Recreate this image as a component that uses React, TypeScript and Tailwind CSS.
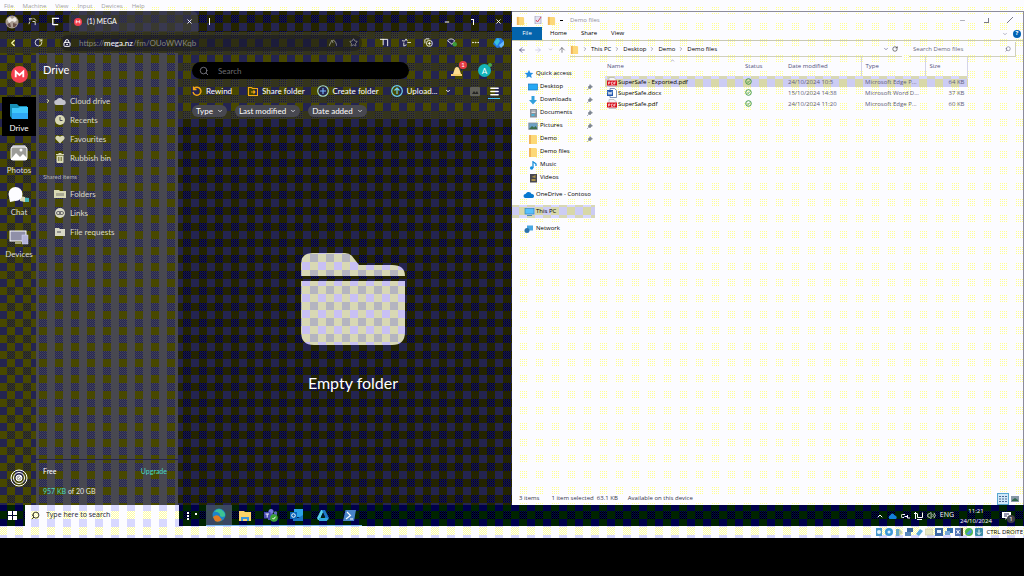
import React from "react";
import type { ReactNode } from "react";
import {
  ArrowLeft, ArrowRight, ArrowUp, ChevronDown, ChevronLeft, ChevronRight, ChevronUp,
  Ellipsis, LockKeyhole, Menu, Minus, RotateCw, Search, Star, X, Volume2,
} from "lucide-react";

const checker = "bg-fixed bg-[position:-1px_-1px] ";
const contentBg =
  checker +
  "bg-[image:conic-gradient(transparent_25%,#242400_0_50%,#242450_0_75%,#242400_0),conic-gradient(#000080_25%,#242400_0_50%,#000070_0_75%,#181800_0)] bg-[size:16px_16px,2px_2px]";
const toolsBg =
  checker +
  "bg-[image:conic-gradient(transparent_25%,#484800_0_50%,#242450_0_75%,#34341c_0),conic-gradient(#242458_25%,#484800_0_50%,#242458_0_75%,#303000_0)] bg-[size:16px_16px,2px_2px]";
const railBg =
  checker +
  "bg-[image:conic-gradient(transparent_25%,#484800_0_50%,#242450_0_75%,#484800_0),conic-gradient(#242450_25%,#303000_0_50%,#242450_0_75%,#383800_0)] bg-[size:16px_16px,2px_2px]";
const sidebarBg =
  checker +
  "bg-[image:conic-gradient(transparent_25%,#484800_0_50%,#484850_0),conic-gradient(#484850_25%,#242458_0_50%,#3c3c54_0_75%,#242458_0)] bg-[size:16px_16px,2px_2px]";
const lightBg =
  checker +
  "bg-[image:conic-gradient(#fcfcff_25%,transparent_0_50%,#fcfcff_0),conic-gradient(#ffff94_25%,#fcfcff_0)] bg-[size:16px_16px,2px_2px]";
const stripBg =
  checker +
  "bg-[image:conic-gradient(#fcfcff_25%,#fcfcff_0_50%,#d8d8ff_0_75%,transparent_0),conic-gradient(#ffff9c_25%,#fcfcff_0_50%,#ffff9c_0_75%,#fcfcff_0)] bg-[size:16px_16px,2px_2px]";
const taskbarBg =
  checker +
  "bg-[image:conic-gradient(transparent_25%,#002400_0_50%,#00004c_0_75%,#002400_0),conic-gradient(#000060_25%,#000000_0_50%,#000040_0_75%,#001800_0)] bg-[size:16px_16px,2px_2px]";
const selectedBg =
  checker + "bg-[image:conic-gradient(#d8d8a8_25%,#d8d8ff_0_50%,#d8d8b4_0_75%,#ccccf4_0)] bg-[size:16px_16px]";

/* ---------- drawings ---------- */

function MegaMark({ className }: { className: string }) {
  return (
    <svg viewBox="0 0 18 18" className={className} aria-hidden="true">
      <circle cx="9" cy="9" r="9" fill="#f43f4e" />
      <path d="M5 12V6l4 3.6L13 6v6" fill="none" stroke="#fff" strokeWidth="2" />
    </svg>
  );
}

function FolderSmall({ className = "size-[9px]" }: { className?: string }) {
  return (
    <svg viewBox="0 0 10 10" className={className} aria-hidden="true">
      <path d="M1 1h7l1 1v8H1z" fill="#fcd878" />
      <path d="M1 1h2v9H1z" fill="#f0b458" />
    </svg>
  );
}

function RailDrive() {
  return (
    <svg viewBox="0 0 18 16" className="h-4 w-[18px]" aria-hidden="true">
      <path d="M0 1h7l2 2h8v13H2L0 13z" fill="#1890b8" />
      <path d="M2 5h6l2-1h8v12H2z" fill="#40c8fc" />
      <path d="M2 10h16v6H2z" fill="#2ea8f4" />
    </svg>
  );
}
function RailPhotos() {
  return (
    <svg viewBox="0 0 18 16" className="h-4 w-[18px]" aria-hidden="true">
      <path d="M3 0h12l2 3H1z" fill="#a8a8b4" />
      <rect x="1" y="2" width="16" height="13" rx="2" fill="#9c9c98" stroke="#fff" />
      <path d="M1 14l5-6 4 4 3-3 4 4v2H1z" fill="#fff" />
      <circle cx="11" cy="5" r="1.500" fill="#fff" />
    </svg>
  );
}
function RailChat() {
  return (
    <svg viewBox="0 0 22 16" className="h-4 w-[22px]" aria-hidden="true">
      <path d="M12 10l9 1v4h-5z" fill="#48b4b4" />
      <path d="M12 9l5 1v5l-5-1z" fill="#d8d8b4" />
      <circle cx="7.500" cy="7" r="7" fill="#fcfcff" />
      <path d="M1 10l1 5 5-1z" fill="#fcfcff" />
    </svg>
  );
}
function RailDevices() {
  return (
    <svg viewBox="0 0 20 16" className="h-4 w-5" aria-hidden="true">
      <rect x="1" y="2" width="16" height="10" fill="#9090a8" stroke="#fff" />
      <path d="M6 14h6" stroke="#fff" />
      <rect x="13" y="6" width="6" height="9" fill="#b4b4d8" stroke="#d8d8fc" strokeWidth=".5" />
    </svg>
  );
}

const side = "h-[10px] w-3 shrink-0";
const sideIcons: Record<string, ReactNode> = {
  cloud: <svg viewBox="0 0 12 10" className={side}><path d="M3 9a2.500 2.500 0 0 1-.5-5A3.600 3.600 0 0 1 9 4a2.500 2.500 0 0 1 .5 5z" fill="#c4c4cc" /></svg>,
  clock: <svg viewBox="0 0 12 10" className={side}><circle cx="6" cy="5" r="5" fill="#d8d8b4" /><path d="M6 2v3.500h2.500" fill="none" stroke="#484850" /></svg>,
  heart: <svg viewBox="0 0 12 10" className={side}><path d="M6 9.500L2 5.500C0 3 3.500 0 6 2.800 8.500 0 12 3 10 5.500z" fill="#d8d8b4" /></svg>,
  bin: <svg viewBox="0 0 12 10" className={side}><path d="M2 1.500h8M4.500 0.500h3" stroke="#d8d8b4" /><path d="M2.500 2.500h7V9a1 1 0 0 1-1 1h-5a1 1 0 0 1-1-1z" fill="#d8d8b4" /><path d="M4.800 4v4M7.200 4v4" stroke="#484800" strokeWidth=".8" /></svg>,
  folders: <svg viewBox="0 0 12 10" className={side}><path d="M0 1h5l1 1h6v7H0z" fill="#d8d8b4" /><path d="M3 4v3M5 4v3M7 4v3M9 4v3" stroke="#606060" strokeWidth=".8" /></svg>,
  link: <svg viewBox="0 0 12 10" className={side}><circle cx="6" cy="5" r="5" fill="#d8d8c4" /><rect x="2.500" y="3.500" width="4" height="3" rx="1.500" fill="none" stroke="#505058" strokeWidth=".8" /><rect x="5.500" y="3.500" width="4" height="3" rx="1.500" fill="none" stroke="#505058" strokeWidth=".8" /></svg>,
  request: <svg viewBox="0 0 12 10" className={side}><path d="M1 1h4l1 1h5v7H1z" fill="#d8d8c4" /><path d="M3 5h4" stroke="#505058" /></svg>,
};

const exp = "size-[10px] shrink-0";
const navIcons: Record<string, ReactNode> = {
  star: <svg viewBox="0 0 10 10" className={exp}><path d="M5 1l1.300 2.800 3 .3-2.200 2 .6 3L5 7.500 2.300 9.100l.6-3-2.200-2 3-.3z" fill="#2490e4" /></svg>,
  desktop: <svg viewBox="0 0 10 10" className={exp}><rect x=".5" y="2" width="9" height="6" fill="#24a8f4" stroke="#1878c0" strokeWidth=".7" /></svg>,
  down: <svg viewBox="0 0 10 10" className={exp}><path d="M3.500 1h3v4H9L5 9.500 1 5h2.500z" fill="#30a0dc" /></svg>,
  doc: <svg viewBox="0 0 10 10" className={exp}><rect x="2" y="1" width="7" height="8.500" fill="#889098" /><path d="M3.500 3h4M3.500 4.500h4" stroke="#fff" strokeWidth=".7" /><rect x="3.500" y="6" width="3" height="2" fill="#48b4d8" /></svg>,
  pic: <svg viewBox="0 0 10 10" className={exp}><rect x=".8" y="2" width="8.500" height="6.500" fill="#6ca0c4" stroke="#889098" strokeWidth=".8" /><path d="M1 8l3-3 2 1.500L7.500 5 9 7v1z" fill="#3c6c48" /></svg>,
  folder: <FolderSmall className={exp} />,
  music: <svg viewBox="0 0 10 10" className={exp}><path d="M5 1v7M5 1.500l3 2.500v2" fill="none" stroke="#1890dc" strokeWidth="1.300" /><circle cx="3.600" cy="8" r="1.700" fill="#1890dc" /></svg>,
  video: <svg viewBox="0 0 10 10" className={exp}><rect x="2" y="1" width="7" height="8.500" fill="#484850" /><path d="M3.500 4l4-2v3zM3.500 6h4v2h-4z" fill="#a89048" /></svg>,
  onedrive: <svg viewBox="0 0 12 10" className="h-[10px] w-3 shrink-0"><path d="M2.500 8a2 2 0 0 1 0-4C4 1 8 1.500 8.500 4A2 2 0 0 1 9.500 8z" fill="#0878d0" /></svg>,
  pc: <svg viewBox="0 0 12 10" className="h-[10px] w-3 shrink-0"><rect x="2" y="1.500" width="9" height="5.500" fill="#58c0fc" stroke="#3888b8" strokeWidth=".7" /><path d="M4 8.500h5" stroke="#4890b8" /></svg>,
  network: <svg viewBox="0 0 12 10" className="h-[10px] w-3 shrink-0"><rect x="4" y="1.500" width="6" height="5" fill="#48a8e4" /><circle cx="4" cy="6.500" r="2.500" fill="#2c74ac" /></svg>,
};

function PinMark() {
  return (
    <svg viewBox="0 0 6 6" className="ml-auto size-[6px]" aria-hidden="true">
      <path d="M3 0.500l2.500 2.500-1 .3L3 5 1 3l1.800-1.500zM0 6l2-2" fill="#7c8490" stroke="#7c8490" strokeWidth=".6" />
    </svg>
  );
}

function PdfIcon() {
  return (
    <svg viewBox="0 0 10 10" className="size-[10px] shrink-0" aria-hidden="true">
      <path d="M2 .5h5l2 2v7H2z" fill="#f4f4f4" stroke="#a8a8a8" strokeWidth=".6" />
      <rect x="0" y="3.500" width="10" height="5" fill="#d8101c" />
      <path d="M1.500 7.500v-2.500h1.500v1.200H1.500M4.500 5v2.500h.8a1.200 1.200 0 0 0 0-2.500zM7.500 7.500V5H9M7.500 6.200h1" fill="none" stroke="#fff" strokeWidth=".6" />
    </svg>
  );
}
function WordIcon() {
  return (
    <svg viewBox="0 0 10 10" className="size-[10px] shrink-0" aria-hidden="true">
      <path d="M3 .5h4.500l2 2v7H3z" fill="#fff" stroke="#506898" strokeWidth=".7" />
      <rect x="0" y="2" width="6" height="6" fill="#2458b0" />
      <path d="M1 3.500l1 3 1-2.500 1 2.500 1-3" fill="none" stroke="#fff" strokeWidth=".8" />
    </svg>
  );
}

/* ---------- browser window ---------- */

const railItems = [
  { label: "Drive", icon: <RailDrive />, active: true },
  { label: "Photos", icon: <RailPhotos /> },
  { label: "Chat", icon: <RailChat /> },
  { label: "Devices", icon: <RailDevices /> },
];

function SideLink({ icon, label, caret }: { icon: string; label: string; caret?: boolean }) {
  return (
    <a href="#" className="flex h-[19px] items-center">
      <span className="flex w-[18px] items-center pl-[9px]">{caret && <ChevronRight size={6} strokeWidth={4} className="text-[#fcfcb4]" />}</span>
      {sideIcons[icon]}
      <span className="pl-1">{label}</span>
    </a>
  );
}

function Action({ icon, label, className = "" }: { icon: ReactNode; label: string; className?: string }) {
  return (
    <button className={"flex items-center gap-1 whitespace-nowrap " + className}>
      {icon}
      {label}
    </button>
  );
}

function Browser() {
  return (
    <section className="flex min-w-0 flex-col font-['Lato',sans-serif] text-[8px] text-white">
      <header className={"flex h-[21px] shrink-0 items-center pl-[5px] pr-[10px] " + contentBg}>
        <svg viewBox="0 0 14 14" className="size-[14px]" aria-label="Profile">
          <circle cx="7" cy="7" r="6.500" fill="#a89c90" />
          <path d="M2 4l3-2 2 2 3-2 2 3-2 2-3-1-3 2z" fill="#ece8e4" />
          <path d="M2 9l3-1 1 4H4zM8 8l4 1-2 3H8z" fill="#685048" />
        </svg>
        <svg viewBox="0 0 10 10" className="ml-[9px] size-[9px]" fill="none" stroke="#e4e4d8"><path d="M1 2h4M2 2v2M1 8l1-3M5 5h3v4M6 1l3 3" /></svg>
        <svg viewBox="0 0 10 10" className="ml-[14px] size-[9px]" fill="none" stroke="#fff"><path d="M1 1.500h8M2 1v8M2 8.500h6" strokeWidth="1.500" /></svg>
        <div className="ml-[9px] flex h-full w-[129px] items-center rounded-t-md bg-[#484850]/60 px-[5px] text-[7px]">
          <MegaMark className="size-2" />
          <span className="pl-[5px]">(1) MEGA</span>
          <button aria-label="Close tab" className="ml-auto"><X size={7} strokeWidth={3} /></button>
        </div>
        <span className="ml-[11px] h-[7px] w-px bg-white" />
        <div className="ml-auto flex items-center gap-[21px]">
          <button aria-label="Minimise"><Minus size={6} strokeWidth={4} /></button>
          <button aria-label="Restore" className="h-[6px] w-[3px] border-r border-t border-white" />
          <button aria-label="Close"><X size={7} strokeWidth={3} /></button>
        </div>
      </header>

      <div className={"flex h-[21px] shrink-0 items-center pl-2 pr-[7px] " + toolsBg}>
        <button aria-label="Back"><ChevronLeft size={10} strokeWidth={3} className="text-[#fcfcb4]" /></button>
        <button aria-label="Reload" className="ml-4"><RotateCw size={9} strokeWidth={2} /></button>
        <div className="ml-[17px] flex h-4 min-w-0 flex-1 items-center rounded-full bg-[#141424]/50 pl-[3px]">
          <LockKeyhole size={8} strokeWidth={3} />
          <span className="pl-2 text-[#84847c]">https://<span className="text-white">mega.nz</span>/fm/OUoWWKqb</span>
          <span className="ml-auto flex items-center gap-3 pr-1 text-[#9c9c90]">
            <svg viewBox="0 0 8 8" className="size-2" fill="none" stroke="currentColor"><path d="M0 7l3-6 1 3M4 1c3 1 3 4 4 6" strokeWidth=".8" /></svg>
            <Star size={9} />
          </span>
        </div>
        <div className="ml-[18px] flex items-center gap-[13px]">
          <svg viewBox="0 0 10 10" className="size-[9px]" fill="none" stroke="#fff"><path d="M0 1.500h8.500V9M3.500 1v7" /></svg>
          <svg viewBox="0 0 10 10" className="size-[9px]" fill="none" stroke="#e4e4d8"><path d="M0 3l3 .5L4.500 1 6 3.500M2 5v4l3-1.500M6 5h4" /></svg>
          <svg viewBox="0 0 10 10" className="size-[9px]" fill="none" stroke="#fff"><rect x="3" y="3" width="6" height="6" rx="2" /><path d="M1 6V2l1-1h4M6 4.500v3M4.500 6h3" /></svg>
          <svg viewBox="0 0 12 10" className="h-[9px] w-3"><path d="M1 3q4-4 8 0l-3 4z" fill="none" stroke="#e4e4e4" /><circle cx="9" cy="7" r="2.500" fill="#3c9c3c" /></svg>
          <Ellipsis size={9} />
          <svg viewBox="0 0 12 12" className="size-3"><path d="M3 1h5l3 3-2 6-5 1-4-4z" fill="#2478e4" /><path d="M1 5l4-4 2 3-3 5z" fill="#38c0dc" /><path d="M6 8l5-4v4l-3 3z" fill="#68b8fc" /></svg>
        </div>
      </div>

      <div className="flex min-h-0 flex-1">
        <nav aria-label="Products" className={"flex w-9 shrink-0 flex-col items-center pb-[18px] pt-[13px] pl-[2px] " + railBg}>
          <MegaMark className="size-[17px] shrink-0" />
          <div className="mt-[14px] flex w-full flex-col gap-[3px]">
            {railItems.map((it) => (
              <a key={it.label} href="#" className={"flex h-[39px] flex-col items-center justify-between pb-[3px] pt-[6px] leading-[10px] " + (it.active ? "bg-black text-white" : "text-[#dcdcd0]")}>
                {it.icon}
                {it.label}
              </a>
            ))}
          </div>
          <svg viewBox="0 0 18 18" className="mt-auto size-[18px]" fill="none" stroke="#fff">
            <circle cx="9" cy="9" r="8" /><circle cx="9" cy="9" r="5.500" /><circle cx="9" cy="9" r="3" fill="#b4b4b4" /><path d="M8 10l3-3" />
          </svg>
        </nav>

        <aside className={"flex w-[142px] shrink-0 flex-col text-[#d8d8c8] " + sidebarBg}>
          <h1 className="px-[7px] pt-[9px] text-[11px] leading-4 text-white">Drive</h1>
          <div className="mt-[13px]">
            <SideLink icon="cloud" label="Cloud drive" caret />
            <SideLink icon="clock" label="Recents" />
            <SideLink icon="heart" label="Favourites" />
            <SideLink icon="bin" label="Rubbish bin" />
          </div>
          <h2 className="mt-[3px] px-[7px] text-[6px] leading-[14px] text-[#b4b4b0]">Shared items</h2>
          <SideLink icon="folders" label="Folders" />
          <SideLink icon="link" label="Links" />
          <SideLink icon="request" label="File requests" />
          <div className="mt-auto border-t border-[#242450] px-[7px] pb-[9px] pt-[6px] text-[7px] leading-[10px]">
            <div className="flex justify-between pr-[4px] text-white">Free<a href="#" className="text-[#48d8c0]">Upgrade</a></div>
            <div className="mt-[10px] text-[#e4e4e4]"><span className="text-[#48d8c0]">957 KB</span> of 20 GB</div>
          </div>
        </aside>

        <main className={"flex min-w-0 flex-1 flex-col " + contentBg}>
          <div className={"pb-[2px] pl-[14px] pr-[12px] pt-[9px] " + toolsBg}>
            <div className="flex items-center">
              <label className="flex h-[17px] w-[217px] items-center gap-[9px] rounded-full bg-black pl-[7px]">
                <Search size={10} className="text-[#80808c]" />
                <input aria-label="Search" placeholder="Search" className="min-w-0 flex-1 bg-transparent text-[8px] outline-none placeholder:text-[#6c6c70]" />
              </label>
              <span className="relative ml-auto mr-[15px]">
                <svg viewBox="0 0 12 12" className="size-3"><path d="M2 9l2-6q2-2 4 0l2 6z" fill="#fcdc90" /><path d="M0 9h11v2H0z" fill="#f8cc70" /></svg>
                <span className="absolute -right-1 -top-1 flex size-[8px] items-center justify-center rounded-full bg-[#e43c44] text-[6px] leading-none">1</span>
              </span>
              <span className="relative mr-[9px] flex size-[13px] items-center justify-center rounded-full bg-[#14b4b8] text-[8px]">
                A
                <span className="absolute -right-px -top-px size-[4px] rounded-full bg-[#48a848]" />
              </span>
            </div>
            <div className="mt-[6px] flex h-3 items-center">
              <Action label="Rewind" icon={<svg viewBox="0 0 10 10" className="size-[10px]" fill="none" stroke="#f4a818" strokeWidth="1.300"><path d="M2 2.500a4 4 0 1 1-1 3.500M1.500 .5v3h3" /></svg>} />
              <Action className="ml-4" label="Share folder" icon={<svg viewBox="0 0 10 10" className="size-[10px]" fill="none" stroke="#f4a818" strokeWidth="1.100"><path d="M.5 1.500h3l1 1h5v7h-9zM3 6h4M5.500 4.500L7 6 5.500 7.500" /></svg>} />
              <Action className="ml-3" label="Create folder" icon={<svg viewBox="0 0 12 12" className="size-3" fill="none" stroke="#a8dcd0" strokeWidth="1.100"><circle cx="6" cy="6" r="5.300" /><path d="M6 3v6M3 6h6" stroke="#78b8fc" /></svg>} />
              <Action className="ml-3" label="Upload..." icon={<svg viewBox="0 0 12 12" className="size-3" fill="none" stroke="#70d0ec" strokeWidth="1.200"><circle cx="6" cy="6" r="5.300" /><path d="M6 9V3M3.500 5.500L6 3l2.500 2.500" /></svg>} />
              <ChevronDown size={6} strokeWidth={4} className="ml-2" />
              <svg viewBox="0 0 10 9" className="ml-auto h-[9px] w-[10px]"><rect width="10" height="9" rx="1" fill="#606058" /><path d="M2 7l2-3 1.500 2L7 4l1.500 3z" fill="#242424" /></svg>
              <button aria-label="List view" className="ml-2 flex w-3 flex-col items-center border-b border-[#48c8f4] pb-px pt-[2px]"><Menu size={11} strokeWidth={3} /></button>
            </div>
            <div className="mt-[8px] flex gap-2">
              {["Type", "Last modified", "Date added"].map((t) => (
                <button key={t} className="flex h-3 items-center gap-1 rounded-full bg-[#484850] px-1 leading-none">
                  {t}
                  <ChevronDown size={6} strokeWidth={3} />
                </button>
              ))}
            </div>
          </div>
          <div className="flex flex-1 flex-col items-center pl-4 pt-[134px]">
            <svg viewBox="0 0 104 92" className="h-[92px] w-[104px] shrink-0" aria-hidden="true">
              <defs>
                <pattern id="weave" width="16" height="16" patternUnits="userSpaceOnUse" x="1" y="1">
                  <path d="M0 0h16v16H0z" fill="#d8d8b4" />
                  <path d="M8 0h8v8H8z" fill="#b4b4c0" />
                  <path d="M0 8h8v8H0z" fill="#c8c0f4" />
                </pattern>
              </defs>
              <path d="M0 23V11Q0 0 12 0h32q4 0 7 3l7 9h33q13 0 13 11zM0 28h104v51q0 13-13 13H13Q0 92 0 79z" fill="url(#weave)" />
            </svg>
            <p className="mt-[26px] text-[16px] leading-6">Empty folder</p>
          </div>
        </main>
      </div>
    </section>
  );
}

/* ---------- file manager window ---------- */

const quick = [
  ["desktop", "Desktop", true], ["down", "Downloads", true], ["doc", "Documents", true],
  ["pic", "Pictures", true], ["folder", "Demo", true], ["folder", "Demo files", false],
  ["music", "Music", false], ["video", "Videos", false],
] as const;

const files = [
  { name: "SuperSafe - Exported.pdf", date: "24/10/2024 10:5", type: "Microsoft Edge P...", size: "64 KB", pdf: true, selected: true },
  { name: "SuperSafe.docx", date: "15/10/2024 14:38", type: "Microsoft Word D...", size: "37 KB", pdf: false, selected: false },
  { name: "SuperSafe.pdf", date: "24/10/2024 11:20", type: "Microsoft Edge P...", size: "60 KB", pdf: true, selected: false },
];

function Explorer() {
  return (
    <section className={"flex min-w-0 flex-col border-r border-t border-[#8c8c9c] font-['Open_Sans',sans-serif] text-[6px] text-black " + lightBg}>
      <header className="flex h-[15px] items-center pl-1 pr-[10px] pt-px">
        <FolderSmall />
        <svg viewBox="0 0 8 8" className="ml-[9px] size-2"><path d="M1 0h6v8H1z" fill="#e4e4f4" stroke="#9090a8" strokeWidth=".6" /><path d="M2 4l1.500 2L7 1" fill="none" stroke="#d84860" /></svg>
        <FolderSmall className="ml-[5px] size-[9px]" />
        <span className="ml-1 h-px w-[3px] bg-black" />
        <span className="ml-[7px] text-[#90909c]">Demo files</span>
        <div className="ml-auto flex items-center gap-[18px] text-[#787888]">
          <button aria-label="Minimise"><Minus size={7} /></button>
          <button aria-label="Restore" className="size-[5px] border-b border-r border-[#787888]" />
          <button aria-label="Close"><svg viewBox="0 0 6 6" className="size-[6px]"><path d="M0 6l6-6" stroke="#787888" /></svg></button>
        </div>
      </header>
      <nav aria-label="Ribbon" className="flex h-[14px] items-center border-b border-[#c8c8b4] pr-[2px]">
        <button className="flex h-full w-[30px] items-center justify-center bg-[#0464ac] text-white">File</button>
        <button className="ml-[8px]">Home</button>
        <button className="ml-[14px]">Share</button>
        <button className="ml-[14px]">View</button>
        <ChevronDown size={6} className="ml-auto mr-[5px] text-[#70708c]" />
        <span className="flex size-2 items-center justify-center rounded-full bg-[#0464b4] font-bold text-white">?</span>
      </nav>
      <div className="flex h-4 items-center pl-[6px] pr-[7px] pt-px">
        <ArrowLeft size={8} className="text-[#34346c]" />
        <ArrowRight size={8} className="ml-2 text-[#c0c0e0]" />
        <ChevronDown size={5} className="ml-[6px] text-[#888]" />
        <ArrowUp size={8} className="ml-[5px] text-[#50505c]" />
        <div className="ml-[4px] flex h-full flex-1 items-center border-b border-[#d0d0bc]">
          <FolderSmall />
          {["This PC", "Desktop", "Demo", "Demo files"].map((c) => (
            <React.Fragment key={c}>
              <ChevronRight size={6} className="mx-[3px] text-[#50506c]" />
              <a href="#">{c}</a>
            </React.Fragment>
          ))}
          <ChevronDown size={6} className="ml-auto text-[#34346c]" />
          <RotateCw size={6} className="ml-[3px] mr-1" />
        </div>
        <label className="ml-[7px] flex h-full w-[107px] items-center border-b border-r border-[#d0d0bc] pl-[4px] pr-1">
          <input aria-label="Search Demo files" placeholder="Search Demo files" className="min-w-0 flex-1 bg-transparent outline-none placeholder:text-[#68687c]" />
          <Search size={6} className="-scale-x-100 text-[#50506c]" />
        </label>
      </div>
      <div className="flex min-h-0 flex-1">
        <nav aria-label="Folders" className="w-[83px] shrink-0 pt-[10px]">
          <a href="#" className="flex h-[13px] items-center gap-[2px] pl-3">{navIcons.star}Quick access</a>
          {quick.map(([icon, label, pin]) => (
            <a key={label} href="#" className="flex h-[13px] items-center gap-[2px] pl-4 pr-[2px]">
              {navIcons[icon]}
              {label}
              {pin && <PinMark />}
            </a>
          ))}
          <div className="flex flex-col gap-[4px] pt-[4px]">
            <a href="#" className="flex h-[13px] items-center gap-px pl-[11px] whitespace-nowrap">{navIcons.onedrive}OneDrive - Contoso</a>
            <a href="#" className={"flex h-[13px] items-center gap-px pl-[11px] " + selectedBg}>{navIcons.pc}This PC</a>
            <a href="#" className="flex h-[13px] items-center gap-px pl-[11px]">{navIcons.network}Network</a>
          </div>
        </nav>
        <div className="min-w-0 flex-1 pl-[10px]">
          <table className="w-[363px] table-fixed text-left text-[#60607c]">
            <colgroup>
              <col className="w-[138px]" /><col className="w-[43px]" /><col className="w-[75px]" /><col className="w-[64px]" /><col />
            </colgroup>
            <thead>
              <tr className="h-[19px] text-[#50507c]">
                <th className="relative pl-[2px] font-normal">Name<ChevronUp size={5} className="absolute left-[65px] top-px" /></th>
                <th className="pl-[2px] font-normal">Status</th>
                <th className="border-r border-[#d4d4e8] pl-[2px] font-normal">Date modified</th>
                <th className="border-r border-[#d4d4e8] pl-1 font-normal">Type</th>
                <th className="border-r border-[#d4d4e8] pl-1 font-normal">Size</th>
              </tr>
            </thead>
            <tbody>
              {files.map((f) => (
                <tr key={f.name} className={"h-[11px] leading-[8px] whitespace-nowrap " + (f.selected ? selectedBg : "")}>
                  <td className="text-black"><span className="flex items-center gap-px pl-[2px]">{f.pdf ? <PdfIcon /> : <WordIcon />}{f.name}</span></td>
                  <td>
                    <svg viewBox="0 0 8 8" className="ml-[2px] size-[7px]" fill="none" stroke="#30903c"><circle cx="4" cy="4" r="3.200" /><path d="M2.500 4l1 1.200L5.500 3" /></svg>
                  </td>
                  <td className="pl-[2px]">{f.date}</td>
                  <td className="pl-1">{f.type}</td>
                  <td className="pr-[3px] text-right">{f.size}</td>
                </tr>
              ))}
            </tbody>
          </table>
        </div>
      </div>
      <footer className="flex h-[13px] items-center pl-[7px] pr-[4px] text-[#34344c]">
        <span>3 items</span>
        <span className="ml-3">1 item selected&nbsp; 63.1 KB</span>
        <span className="ml-[10px]">Available on this device</span>
        <button aria-label="Details view" className="ml-auto flex h-3 w-3 items-center justify-center border border-[#58a8d0] bg-[#d0e8f8]">
          <svg viewBox="0 0 8 8" className="size-2" stroke="#486894"><path d="M0 1.500h2M3 1.500h2M6 1.500h2M0 4h2M3 4h2M6 4h2M0 6.500h2M3 6.500h2M6 6.500h2" /></svg>
        </button>
        <button aria-label="Icon view" className="ml-[2px]"><svg viewBox="0 0 8 6" className="h-[6px] w-2"><rect width="8" height="6" fill="#8898a8" /><path d="M1 4l3-2 3 2v1H1z" fill="#30684c" /></svg></button>
      </footer>
    </section>
  );
}

/* ---------- task bar ---------- */

const appButton = "flex w-[26px] items-center justify-center border-b border-[#78b8f0]";

function Taskbar() {
  return (
    <footer className={"flex h-[21px] items-stretch font-['Open_Sans',sans-serif] text-[6px] text-white " + taskbarBg}>
      <button aria-label="Start" className="flex w-[25px] items-center justify-center">
        <svg viewBox="0 0 9 9" className="size-[9px]" fill="#fff"><path d="M0 0h4v4H0zM5 0h4v4H5zM0 5h4v4H0zM5 5h4v4H5z" /></svg>
      </button>
      <label className={"flex w-[154px] items-center gap-[6px] pl-[6px] text-black " + stripBg}>
        <Search size={9} className="-scale-x-100" />
        <input aria-label="Type here to search" placeholder="Type here to search" className="min-w-0 flex-1 bg-transparent text-[7px] outline-none placeholder:text-[#24243c]" />
      </label>
      <div className="flex w-[27px] items-center gap-[6px] pl-2">
        <span className="flex flex-col gap-px"><i className="size-[2px] bg-white" /><i className="size-[2px] bg-white" /><i className="size-[2px] bg-white" /></span>
        <span className="mb-[4px] size-[2px] bg-white" />
      </div>
      <button aria-label="Edge" className={appButton + " bg-[#485868]/80"}>
        <svg viewBox="0 0 14 14" className="size-[14px]"><circle cx="7" cy="7" r="6.500" fill="#1c84cc" /><path d="M2 4q5-6 10 0 3 5-2 5-3-1-2-3-3-3-6-2z" fill="#3cc494" /><path d="M1 9q3-3 6-1l3 4q-4 3-7 1z" fill="#e07c24" /></svg>
      </button>
      <button aria-label="File Explorer" className={appButton}>
        <svg viewBox="0 0 12 11" className="h-[11px] w-3"><path d="M0 1h5l1 1h6v9H0z" fill="#fcd468" /><path d="M2 7h8v4H8V9H4v2H2z" fill="#3c98dc" /></svg>
      </button>
      <button aria-label="Teams" className={appButton}>
        <svg viewBox="0 0 14 13" className="h-[13px] w-[14px]"><circle cx="7" cy="2.500" r="2.500" fill="#7478dc" /><circle cx="11.500" cy="4" r="1.700" fill="#6068c4" /><rect x="4" y="5" width="9" height="6" fill="#5058b4" /><rect y="3" width="6.500" height="6.500" fill="#484cb0" /><path d="M1.500 5h3.500M3.200 5v3.500" stroke="#fff" strokeWidth=".9" /><circle cx="10" cy="9" r="3.800" fill="#3ca434" /><path d="M8.500 9l1 1.200 2-2.500" fill="none" stroke="#fff" /></svg>
      </button>
      <button aria-label="Outlook" className={appButton}>
        <svg viewBox="0 0 14 12" className="h-3 w-[14px]"><rect x="4" width="9" height="8" fill="#2ca4e8" /><path d="M3 6l5 3 5-3v6H3z" fill="#1874c4" /><rect y="3" width="7" height="7" fill="#0c64b8" /><circle cx="3.500" cy="6.500" r="1.800" fill="none" stroke="#fff" /></svg>
      </button>
      <button aria-label="Prism" className={appButton}>
        <svg viewBox="0 0 12 12" className="size-3"><path d="M4 1h3l-3.500 8L6 11H1L0 9z" fill="#58d0ec" /><path d="M5 1h3l4 8-1 2H7l1-3z" fill="#1c78c8" /><path d="M2 9h9l-1 3H2z" fill="#30a8dc" /><path d="M6 4l2 4H4z" fill="#001830" /></svg>
      </button>
      <button aria-label="PowerShell" className={appButton}>
        <svg viewBox="0 0 13 11" className="h-[11px] w-[13px]"><path d="M2.500 0H13l-2 11H0z" fill="#4884c8" /><path d="M4 2l3.500 3.500L3 9M7 9h3" fill="none" stroke="#fff" strokeWidth="1.200" /></svg>
      </button>
      <div className="ml-auto flex items-center gap-[4px] pr-[12px]">
        <ChevronUp size={8} strokeWidth={3} />
        <svg viewBox="0 0 9 6" className="h-[6px] w-[9px]"><path d="M1.500 6a2 2 0 0 1 .5-3.500q2-4 5 0a2 2 0 0 1 1 3.500z" fill="#1480dc" /></svg>
        <svg viewBox="0 0 9 8" className="h-2 w-[9px]" fill="none" stroke="#fff"><path d="M4 2.500H1.500a1.500 1.500 0 0 0 0 3H3M3.500 4.500h3M6.500 3v3H9" /></svg>
        <svg viewBox="0 0 9 8" className="h-2 w-[9px]" fill="none" stroke="#fff"><path d="M1.500 0v7M0 1.500h3M3.500 1.500v4h5v-5M3 7.500h5" /></svg>
        <Volume2 size={9} />
        <span className="text-[7px]">ENG</span>
        <time className="w-[36px] text-center leading-[10px] whitespace-nowrap">11:21<br />24/10/2024</time>
        <span className="relative ml-[4px]">
          <svg viewBox="0 0 10 10" className="size-[10px]"><path d="M0 1h9v6H5L3.500 9V7H0z" fill="#fff" /><path d="M2 3h5M2 5h3" stroke="#000040" strokeWidth=".8" /></svg>
          <span className="absolute -bottom-[2px] -right-[3px] flex size-[8px] items-center justify-center rounded-full bg-[#404048] leading-none">1</span>
        </span>
      </div>
    </footer>
  );
}

const deviceLights: ReactNode[] = [
  <g><rect x="1" y="0" width="6" height="8" fill="#4898cc" /><circle cx="4" cy="4" r="2" fill="#e4f4fc" /></g>,
  <g><circle cx="4" cy="4" r="4" fill="#3c98d8" /><circle cx="4" cy="4" r="1.500" fill="#d8f0fc" /></g>,
  <g><path d="M1 1h3l3 3-3 4H1z" fill="#68a8c8" /><path d="M4 2l4 3-4 2z" fill="#c8d0a0" /></g>,
  <g><rect x="2" y="0" width="6" height="4" fill="#3c68a0" /><rect x="0" y="4" width="6" height="4" fill="#5888bc" /></g>,
  <g><path d="M1 6l4-5 3 2-4 5z" fill="#58a8dc" /></g>,
  <g><path d="M0 1h8v6H0z" fill="#e8e8c4" stroke="#c4c4a4" strokeWidth=".6" /></g>,
  <g><rect width="8" height="8" fill="#3c68a4" /><path d="M2 2h4v3H2z" fill="#e4f0fc" /></g>,
  <g><rect x="2" y="0" width="6" height="5" fill="#3470b0" /><rect y="3" width="5" height="4" fill="#78a8d8" /></g>,
  <g><rect width="6" height="8" fill="#5474b4" /><path d="M1.500 2l3 4M4.500 2l-3 4" stroke="#fff" /><path d="M7 0v8" stroke="#000" strokeWidth="1.500" /></g>,
  <g><circle cx="4" cy="4" r="4" fill="#4cb848" /><path d="M1 6l5-5 1 3-3 3z" fill="#4c90e0" /></g>,
  <g><rect width="8" height="8" rx="1" fill="#3c8ca8" /><path d="M4 1.500v5M2 4.500l2 2 2-2" fill="none" stroke="#fff" /></g>,
];

export default function App() {
  return (
    <div className="grid h-screen grid-rows-[auto_minmax(0,1fr)_auto_auto] overflow-hidden bg-black pb-[38px]">
      <nav aria-label="Machine" className={"flex h-[11px] items-center gap-[9px] pl-1 pt-px font-['Open_Sans',sans-serif] text-[6px] text-[#a0a0a8] " + lightBg}>
        {["File", "Machine", "View", "Input", "Devices", "Help"].map((m) => (
          <button key={m}>{m}</button>
        ))}
      </nav>
      <div className="grid min-h-0 grid-cols-2">
        <Browser />
        <Explorer />
      </div>
      <Taskbar />
      <div className={"flex h-3 items-center justify-end gap-[2px] pr-px font-['Open_Sans',sans-serif] text-[6px] text-black " + stripBg}>
        {deviceLights.map((d, i) => (
          <svg key={i} viewBox="0 0 8 8" className="size-2" aria-hidden="true">{d}</svg>
        ))}
        <span className="pl-px whitespace-nowrap">CTRL DROITE</span>
      </div>
    </div>
  );
}
